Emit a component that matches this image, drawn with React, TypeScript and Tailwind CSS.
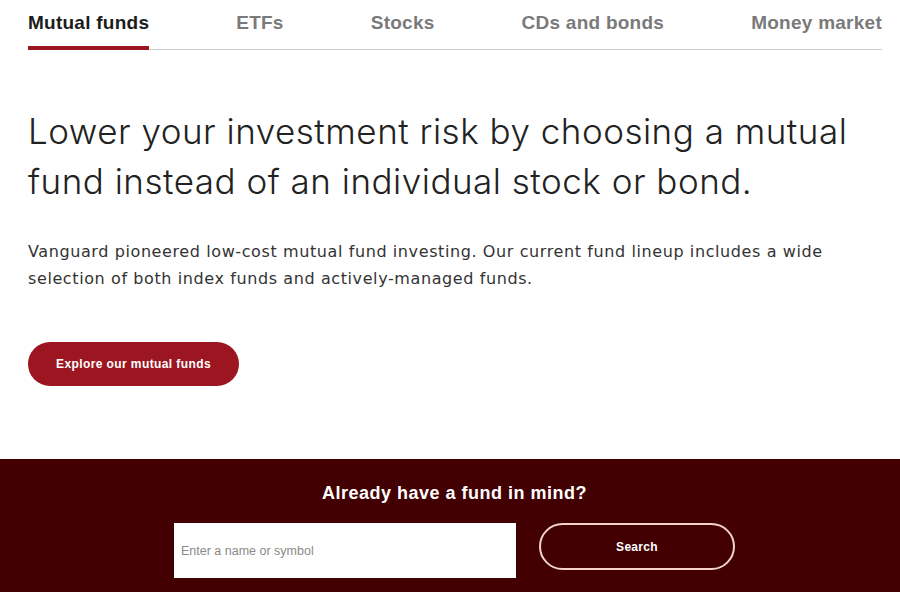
import React from 'react'

const tabs = ['Mutual funds', 'ETFs', 'Stocks', 'CDs and bonds', 'Money market']

export default function App() {
  return (
    <div className="w-[900px] h-[592px] overflow-hidden bg-white font-['Liberation_Sans',Arial,sans-serif]">
      {/* Tabs */}
      <nav className="mx-[28px] pt-[12px] border-b border-[#cfcfcf] w-[854px]">
        <ul className="flex justify-between">
          {tabs.map((t, i) => (
            <li
              key={t}
              className={
                i === 0
                  ? 'text-[19px] tracking-[0.25px] font-bold text-[#1c1c1c] pb-[12px] border-b-4 border-[#9b1620] -mb-px leading-[22px]'
                  : 'text-[19px] tracking-[0.25px] font-bold text-[#7a7a7a] pb-[12px] leading-[22px]'
              }
            >
              {t}
            </li>
          ))}
        </ul>
      </nav>

      {/* Intro */}
      <section className="px-[28px] pt-[56px] h-[409px]">
        <h1 className="font-['Inter',sans-serif] font-light text-[35px] leading-[50px] text-[#222] tracking-[0.5px] w-[840px]">
          Lower your investment risk by choosing a mutual fund instead of an individual stock or bond.
        </h1>
        <p className="mt-[32px] font-['DejaVu_Sans',sans-serif] text-[16px] leading-[27px] text-[#333] tracking-[0.6px] w-[820px]">
          Vanguard pioneered low-cost mutual fund investing. Our current fund lineup includes a wide selection of both index funds and actively-managed funds.
        </p>
        <button className="mt-[50px] w-[211px] h-[44px] rounded-full bg-[#9b1620] text-white text-[12px] tracking-[0.4px] font-bold">
          Explore our mutual funds
        </button>
      </section>

      {/* Search band */}
      <section className="bg-[#420003] h-[133px] pl-[33px] pr-[24px] pt-[23px]">
        <h2 className="text-center text-white text-[18px] tracking-[0.5px] font-bold leading-[22px]">
          Already have a fund in mind?
        </h2>
        <div className="mt-[19px] flex justify-center gap-[23px]">
          <input
            className="w-[342px] h-[55px] bg-white px-[7px] text-[12.5px] text-[#333] placeholder:text-[#8a8a8a] outline-none"
            placeholder="Enter a name or symbol"
          />
          <button className="w-[196px] h-[47px] rounded-full border-2 border-[#f1d3cb] text-white text-[12px] tracking-[0.3px] font-bold">
            Search
          </button>
        </div>
      </section>
    </div>
  )
}
